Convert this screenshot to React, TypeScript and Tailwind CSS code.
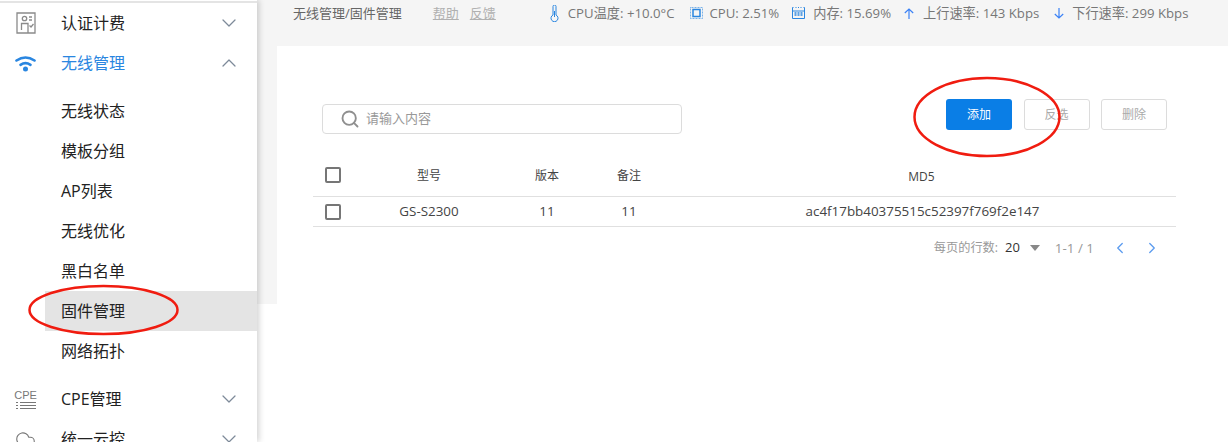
import { ChevronDown, ChevronLeft, ChevronRight, ChevronUp, Cloud, Search } from "lucide-react";
import type { ReactNode } from "react";

const subItems = ["无线状态", "模板分组", "AP列表", "无线优化", "黑白名单", "固件管理", "网络拓扑"];

function AuthIcon() {
  return (
    <svg width="20" height="22" viewBox="0 0 20 22" fill="none" stroke="#8a8a8a" strokeWidth="1.300">
      <path d="M1 1h18v20H1z" />
      <circle cx="8.500" cy="6.500" r="2.200" />
      <path d="M5.500 18v-6.500h6.500V21M13 5h3M13 8h3M13.500 13.500l1.500 1.500 2.500-3" />
    </svg>
  );
}

function WifiIcon() {
  return (
    <svg width="21" height="17" viewBox="0 0 21 17" fill="none" stroke="#2a86e0" strokeWidth="2.600" strokeLinecap="round">
      <path d="M1.500 5.500Q10.500 -0.500 19.500 5.500" />
      <path d="M5.500 9.800Q10.500 6.500 15.500 9.800" />
      <circle cx="10.500" cy="14" r="1.200" fill="#2a86e0" />
    </svg>
  );
}

function CpeIcon() {
  return (
    <div className="flex w-[20px] flex-col items-center">
      <span className="h-[11px] text-[11px] leading-[11px] font-light text-[#777] font-['Liberation_Sans',sans-serif]">CPE</span>
      <svg width="20" height="8" viewBox="0 0 20 8" fill="none" stroke="#777" strokeWidth="1">
        <path d="M4 1.500h16M4 4.500h16M4 7.500h16M0 1.500h2M0 4.500h2M0 7.500h2" />
      </svg>
    </div>
  );
}

function ThermoIcon() {
  return (
    <svg width="9" height="17" viewBox="0 0 9 17" fill="none" stroke="#2a86e0" strokeWidth="1">
      <path d="M3 1.500a1.500 1.500 0 0 1 3 0V10a3.500 3.500 0 1 1-3 0z" />
      <path d="M4.500 6v6" />
    </svg>
  );
}

function CpuIcon() {
  return (
    <svg width="15" height="14" viewBox="0 0 15 14" fill="none" stroke="#2a86e0">
      <rect x="1.500" y="1.500" width="12" height="11" strokeWidth="1" strokeDasharray="1 0.500" opacity="0.6" />
      <rect x="4" y="3.500" width="7" height="7" strokeWidth="1.500" />
    </svg>
  );
}

function MemIcon() {
  return (
    <svg width="13" height="12" viewBox="0 0 13 12" fill="none" stroke="#2a86e0" strokeWidth="1">
      <path d="M0.500 0.500v11h12V0.500M0.500 4h12M0.500 0.500h1M3.500 0.500h1M6 0.500h1M8.500 0.500h1M11.500 0.500h1" />
      <path d="M2.500 6h2M5.500 6h2M8.500 6h2M2.500 8h2M5.500 8h2M8.500 8h2" strokeWidth="1.500" />
    </svg>
  );
}

function UpIcon() {
  return (
    <svg width="10" height="11" viewBox="0 0 10 11" fill="none" stroke="#3b82f6" strokeWidth="1.200">
      <path d="M5 11V1M0.800 5L5 1l4.200 4" />
    </svg>
  );
}

function DownIcon() {
  return (
    <svg width="10" height="11" viewBox="0 0 10 11" fill="none" stroke="#3b82f6" strokeWidth="1.200">
      <path d="M5 0v10M0.800 6L5 10l4.200-4" />
    </svg>
  );
}

function MenuRow({ icon, label, open, active }: { icon: ReactNode; label: string; open?: boolean; active?: boolean }) {
  return (
    <div className="flex h-10 items-center pl-[15px] pr-[16px]">
      <div className="flex w-[21px] justify-center">{icon}</div>
      <span className={`ml-[25px] flex-1 text-[16px] ${active ? "text-[#2a86e0]" : "text-[#222]"}`}>{label}</span>
      {open ? (
        <ChevronUp size={24} strokeWidth={1.25} className="text-[#7d8a99]" />
      ) : (
        <ChevronDown size={24} strokeWidth={1.25} className="text-[#7d8a99]" />
      )}
    </div>
  );
}

function Checkbox() {
  return <div className="h-[16px] w-[16px] rounded-[2px] border-2 border-[#767676]" />;
}

export default function App() {
  return (
    <div className="relative flex h-[442px] w-[1228px] overflow-hidden bg-white font-['Open_Sans','Noto_Sans_CJK_SC',sans-serif]">
      {/* Sidebar */}
      <div className="z-10 h-full w-[257px] shrink-0 bg-white shadow-[2px_0_6px_rgba(0,0,0,0.18)]">
        <div className="h-[3px] border-b-2 border-[#e4e4e4]" />
        <MenuRow icon={<AuthIcon />} label="认证计费" />
        <MenuRow icon={<WifiIcon />} label="无线管理" open active />
        <div className="py-2">
          {subItems.map((item) => (
            <div
              key={item}
              className={`ml-[45px] flex h-10 items-center pl-[16px] text-[16px] text-[#222] ${item === "固件管理" ? "bg-[#e4e4e4]" : ""}`}
            >
              {item}
            </div>
          ))}
        </div>
        <MenuRow icon={<CpeIcon />} label="CPE管理" />
        <MenuRow icon={<Cloud size={24} strokeWidth={1.25} className="text-[#777]" />} label="统一云控" />
      </div>

      {/* Main */}
      <div className="h-[304px] flex-1 bg-[#f5f5f5]">
        <div className="flex h-[46px] items-start whitespace-nowrap pl-[36px] pt-[4px] text-[13.200px] leading-[18px] text-[#777]">
          <span className="text-[13px] text-[#666]">无线管理/固件管理</span>
          <span className="ml-[31px] text-[13px] text-[#b0b0b0] underline">帮助</span>
          <span className="ml-[11px] text-[13px] text-[#b0b0b0] underline">反馈</span>
          <div className="ml-[54px] flex items-center">
            <ThermoIcon />
            <span className="ml-[9px]">CPU温度: +10.0°C</span>
            <div className="ml-[14px]"><CpuIcon /></div>
            <span className="ml-[6px]">CPU: 2.51%</span>
            <div className="ml-[13px]"><MemIcon /></div>
            <span className="ml-[8px]">内存: 15.69%</span>
            <div className="ml-[13px]"><UpIcon /></div>
            <span className="ml-[9px]">上行速率: 143 Kbps</span>
            <div className="ml-[15px]"><DownIcon /></div>
            <span className="ml-[8px]">下行速率: 299 Kbps</span>
          </div>
        </div>

        <div className="ml-[20px] h-[258px] bg-white pl-[36px] pr-[52px] pt-[53px]">
          <div className="flex items-start justify-between">
            <div className="ml-[9px] mt-[5px] flex h-[30px] w-[360px] items-center rounded-[4px] border border-[#dcdcdc] pl-[17px]">
              <Search size={20} strokeWidth={2.250} className="text-[#8f8f8f]" />
              <span className="ml-[6px] text-[13px] text-[#999]">请输入内容</span>
            </div>
            <div className="mr-[9px] flex gap-[11.500px] text-[12px]">
              <button className="h-[31px] w-[66px] rounded-[3px] bg-[#0a7ee6] text-white">添加</button>
              <button className="h-[31px] w-[66px] rounded-[3px] border border-[#dcdcdc] text-[#aaa]">反选</button>
              <button className="h-[31px] w-[66px] rounded-[3px] border border-[#dcdcdc] text-[#aaa]">删除</button>
            </div>
          </div>

          <div className="mt-[22px] text-[#444]">
            <div className="grid h-[41px] grid-cols-[40px_152px_84px_80px_1fr] items-center border-b border-[#e0e0e0] text-center text-[12px]">
              <div className="mb-[2px] pl-[12px]"><Checkbox /></div>
              <span>型号</span>
              <span>版本</span>
              <span>备注</span>
              <span className="mt-[1px] pr-[2px]">MD5</span>
            </div>
            <div className="grid h-[30px] grid-cols-[40px_152px_84px_80px_1fr] items-center border-b border-[#e0e0e0] text-center text-[13.400px]">
              <div className="pl-[12px]"><Checkbox /></div>
              <span>GS-S2300</span>
              <span>11</span>
              <span>11</span>
              <span>ac4f17bb40375515c52397f769f2e147</span>
            </div>
          </div>

          <div className="mt-[11px] flex items-center justify-end pr-[15px] text-[12px] text-[#999]">
            <span className="text-[12.200px]">每页的行数:</span>
            <span className="ml-[7px] text-[13px] text-[#333]">20</span>
            <div className="ml-[10px] h-0 w-0 border-x-[5.500px] border-t-[6px] border-x-transparent border-t-[#888]" />
            <span className="ml-[15px] text-[13.400px]">1-1 / 1</span>
            <ChevronLeft size={18} strokeWidth={1.750} className="ml-[17px] text-[#5b9bef]" />
            <ChevronRight size={18} strokeWidth={1.750} className="ml-[14px] text-[#5b9bef]" />
          </div>
        </div>
      </div>

      {/* red annotation circles */}
      <svg className="absolute left-0 top-0 z-20" width="1228" height="442" fill="none" stroke="#f01c10" strokeWidth="2.500">
        <ellipse cx="103.500" cy="310" rx="74" ry="24" />
        <ellipse cx="987" cy="117" rx="72.500" ry="39" />
      </svg>
    </div>
  );
}
